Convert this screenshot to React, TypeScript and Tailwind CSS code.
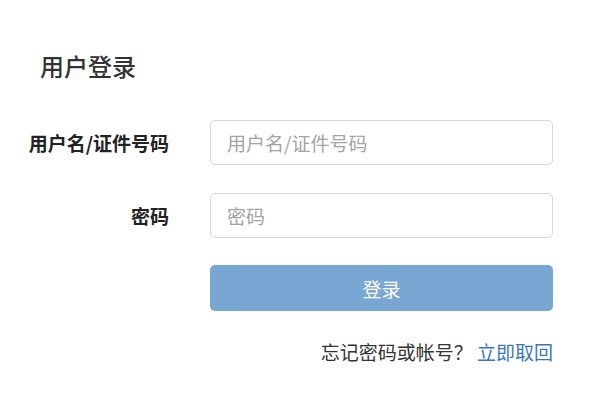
import React from "react";

export default function App() {
  const font = { fontFamily: '"Noto Sans CJK SC", "Noto Sans", sans-serif' };
  return (
    <div className="w-[600px] h-[400px] bg-white overflow-hidden" style={font}>
      <div className="ml-[40px] pt-[54px] text-[24px] leading-none font-medium text-[#333333]">用户登录</div>
      <div className="mt-[42px] flex flex-col">
        <div className="flex items-center">
          <div className="w-[169px] text-right text-[19px] leading-none font-bold text-[#222222] whitespace-nowrap">用户名/证件号码</div>
          <input
            className="ml-[41px] w-[343px] h-[45px] border border-[#d6d6d6] rounded-[5px] pl-4 text-[19px] text-[#333] placeholder:text-[#a3a3a3] outline-none"
            placeholder="用户名/证件号码"
            style={font}
          />
        </div>
        <div className="flex items-center mt-[28px]">
          <div className="w-[169px] text-right text-[19px] leading-none font-bold text-[#222222]">密码</div>
          <input
            type="text"
            className="ml-[41px] w-[343px] h-[45px] border border-[#d6d6d6] rounded-[5px] pl-4 text-[19px] text-[#333] placeholder:text-[#a3a3a3] outline-none"
            placeholder="密码"
            style={font}
          />
        </div>
        <div className="flex mt-[27px]">
          <button
            className="ml-[210px] w-[343px] h-[46px] rounded-[5px] bg-[#78a7d3] text-white text-[19px] leading-none"
            style={font}
          >
            登录
          </button>
        </div>
        <div className="flex mt-[31px]">
          <div className="ml-[200px] w-[353px] text-right text-[19px] leading-none text-[#333333] whitespace-nowrap">
            忘记密码或帐号？ <span className="text-[#3b78b8]">立即取回</span>
          </div>
        </div>
      </div>
    </div>
  );
}
